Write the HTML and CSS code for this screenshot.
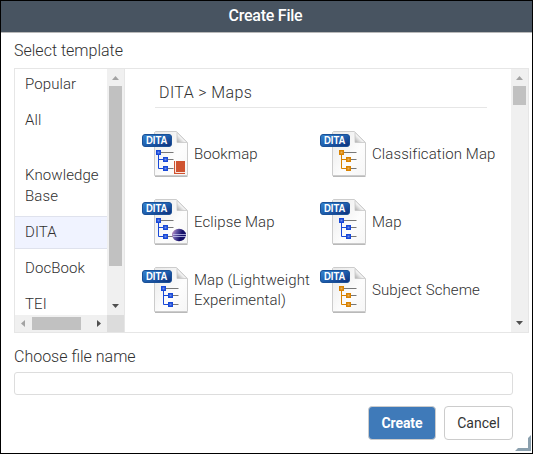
FILE: index.html
```html
<!DOCTYPE html>
<html lang="en">
<head>
<meta charset="utf-8">
<title>Create File</title>
<link rel="stylesheet" href="styles.css">
</head>
<body>
<svg class="defs" width="0" height="0" aria-hidden="true">
  <defs>
    <linearGradient id="paper" x1="0" y1="0" x2="1" y2="1"><stop offset="0" stop-color="#e8e8e8"/><stop offset=".6" stop-color="#fdfdfd"/><stop offset="1" stop-color="#f6f6f6"/></linearGradient>
    <linearGradient id="badge" x1="0" y1="0" x2="1" y2="1"><stop offset="0" stop-color="#3684cf"/><stop offset=".5" stop-color="#1f5fae"/><stop offset="1" stop-color="#0b2c78"/></linearGradient>
    <linearGradient id="fold" x1="0" y1="1" x2="1" y2="0"><stop offset="0" stop-color="#a8a8a8"/><stop offset=".5" stop-color="#ffffff"/></linearGradient>
    <linearGradient id="globe" x1="0" y1="0" x2="1" y2=".3"><stop offset="0" stop-color="#dba6cb"/><stop offset=".35" stop-color="#6a5aa8"/><stop offset=".75" stop-color="#15106a"/></linearGradient>
    <symbol id="doc" viewBox="0 0 48 48">
      <path d="M13 46.5H45.5" stroke="#8b8b8b" stroke-width="1" opacity=".6"/>
      <path d="M13.5 1.5H34.5L45.5 12.5V45.5H12.5V2.5Z" fill="url(#paper)" stroke="#cccccc"/>
      <path d="M35 2.5V12.5H45Z" fill="url(#fold)" stroke="#c8c8c8" stroke-width=".8"/>
      <rect x=".5" y="4.5" width="29" height="12" rx="2.5" fill="url(#badge)" stroke="#1b5197"/>
      <text class="badge-text" x="4" y="14" textLength="21.5" lengthAdjust="spacingAndGlyphs">DITA</text>
    </symbol>
    <symbol id="tree" viewBox="0 0 24 24">
      <path d="M5 3.5H17.5M12 10.5H17.5M12 19.5H17.5" stroke="#777777" fill="none"/>
      <path d="M2.5 3V19.5H8M2.5 10.5H8" stroke="currentColor" fill="none"/>
      <path d="M0 1h5v5h-5zM7 8h5v5h-5zM7 17h5v5h-5z" fill="currentColor"/>
      <path d="M1.5 2.5h2v2h-2zM8.5 9.5h2v2h-2zM8.5 18.5h2v2h-2z" fill="#fff" opacity=".38"/>
    </symbol>
  </defs>
</svg>
<div class="dialog">
  <header class="title">Create File</header>
  <main class="body">
    <div class="label">Select template</div>
    <section class="picker">
      <div class="sidebar">
        <nav class="categories">
          <div class="category">Popular</div>
          <div class="category all">All</div>
          <div class="category">Knowledge Base</div>
          <div class="category selected">DITA</div>
          <div class="category">DocBook</div>
          <div class="category">TEI</div>
        </nav>
        <div class="scroll-y"><i class="arrow up"></i><i class="thumb tall"></i><i class="arrow down"></i></div>
        <div class="scroll-x"><i class="arrow left"></i><i class="thumb wide"></i><i class="arrow right"></i></div>
        <div class="corner"></div>
      </div>
      <div class="templates">
        <h2 class="group">DITA &gt; Maps</h2>
        <div class="grid">
          <div class="template">
            <svg class="icon blue" viewBox="0 0 48 48"><use href="#doc" width="48" height="48"/><use href="#tree" x="14" y="19" width="24" height="24"/><path d="M32 31h11v13H32z" fill="#cf5330"/><path d="M33.5 31v11.5H43" stroke="#fbe6df" fill="none"/></svg>
            <span class="name">Bookmap</span>
          </div>
          <div class="template">
            <svg class="icon orange" viewBox="0 0 48 48"><use href="#doc" width="48" height="48"/><use href="#tree" x="19" y="19" width="24" height="24"/></svg>
            <span class="name">Classification Map</span>
          </div>
          <div class="template">
            <svg class="icon blue" viewBox="0 0 48 48"><use href="#doc" width="48" height="48"/><use href="#tree" x="14" y="19" width="24" height="24"/><ellipse cx="37" cy="37" rx="7" ry="6.2" fill="url(#globe)"/><path d="M31 36.5h13M31 38.5h13" stroke="#c3c4ee" stroke-width=".8"/></svg>
            <span class="name">Eclipse Map</span>
          </div>
          <div class="template">
            <svg class="icon blue" viewBox="0 0 48 48"><use href="#doc" width="48" height="48"/><use href="#tree" x="19" y="19" width="24" height="24"/></svg>
            <span class="name">Map</span>
          </div>
          <div class="template">
            <svg class="icon blue" viewBox="0 0 48 48"><use href="#doc" width="48" height="48"/><use href="#tree" x="19" y="19" width="24" height="24"/></svg>
            <span class="name">Map (Lightweight<br>Experimental)</span>
          </div>
          <div class="template">
            <svg class="icon orange" viewBox="0 0 48 48"><use href="#doc" width="48" height="48"/><use href="#tree" x="19" y="19" width="24" height="24"/></svg>
            <span class="name">Subject Scheme</span>
          </div>
        </div>
      </div>
      <div class="scroll-y"><i class="arrow up"></i><i class="thumb short"></i><i class="arrow down"></i></div>
    </section>
    <label class="label file-label" for="file">Choose file name</label>
    <input class="file" id="file" type="text">
    <footer class="actions">
      <button class="button primary">Create</button>
      <button class="button">Cancel</button>
    </footer>
  </main>
  <svg class="grip" viewBox="0 0 16 16"><path d="M16 0V16H0L3 13H13V3Z" fill="#8ba0ae"/></svg>
</div>
</body>
</html>
```
FILE: styles.css
```css
* { box-sizing: border-box; }
body { margin: 0; background: #fff; font: 300 16px/20px Roboto, sans-serif; color: #303030; overflow: hidden; }
.defs { position: absolute; }
.dialog { position: relative; width: 533px; height: 454px; border: 1px solid #000; background: #fff; }
.title { height: 32px; padding-right: 2px; background: #485461; border-bottom: 1px solid #b9b9b9; color: #fff; text-align: center; font-weight: 500; line-height: 29px; letter-spacing: -.25px; }
.body { display: flex; flex-direction: column; padding: 0 3px 0 13px; }
.label { height: 35px; padding-top: 8px; }
.picker { display: flex; width: 515px; height: 265px; border: 1px solid #e6e6e6; }
.sidebar { display: grid; grid-template: 246px 17px / 92px 17px; width: 110px; border-right: 1px solid #e6e6e6; }
.categories { overflow: hidden; }
.category { height: 33px; margin-bottom: 3px; padding: 5px 10px 0; font-size: 15px; line-height: 21px; letter-spacing: .1px; }
.category:nth-child(3) { height: 54px; margin-bottom: 2px; padding-right: 0; }
.category.all { margin-bottom: 22px; }
.category.selected { margin-bottom: 4px; background: #f0f3ff; border: solid #dfe2ed; border-width: 1px 0; }
.scroll-y { display: flex; flex-direction: column; align-items: center; width: 17px; padding: 7px 0; background: #f0f0f0; }
.scroll-x { display: flex; align-items: center; padding: 0 6px; background: #f0f0f0; }
.corner { background: #dcdcdc; }
.thumb { background: #c1c1c1; }
.tall { width: 13px; height: 180px; margin-top: 6px; }
.short { width: 13px; height: 19px; margin-top: 6px; }
.wide { width: 49px; height: 13px; margin-left: 7px; }
.arrow { width: 7px; height: 4px; background: #505050; clip-path: polygon(0 0, 100% 0, 50% 100%); }
.up { background: #a3a3a3; clip-path: polygon(0 100%, 50% 0, 100% 100%); }
.down { margin-top: auto; }
.left, .right { width: 4px; height: 7px; }
.left { background: #a3a3a3; clip-path: polygon(100% 0, 0 50%, 100% 100%); }
.right { margin-left: auto; clip-path: polygon(0 0, 100% 50%, 0 100%); }
.templates { width: 386px; overflow: hidden; }
.group { width: 332px; height: 39px; margin: 0 0 22px 30px; padding: 14px 0 0 4px; border-bottom: 1px solid #e6e6e6; font-size: 16px; font-weight: 300; line-height: 20px; letter-spacing: .4px; }
.grid { display: grid; grid-template-columns: 178px 190px; grid-auto-rows: 68px; padding-left: 17px; }
.template { display: flex; align-items: center; gap: 4px; height: 48px; }
.icon { width: 48px; height: 48px; flex: none; }
.blue { color: #1748d8; }
.orange { color: #d98200; }
.badge-text { font: 700 10px "Liberation Sans", sans-serif; fill: #fff; }
.name { font-size: 15px; white-space: nowrap; letter-spacing: .1px; }
.file-label { height: 39px; padding-top: 14px; }
.file { width: 499px; height: 23px; padding: 0 6px; border: 1px solid #ddd; border-radius: 3px; font: inherit; }
.actions { display: flex; justify-content: flex-end; gap: 8px; margin-top: 11px; padding-right: 16px; }
.button { width: 69px; height: 34px; padding: 0; border: 1px solid #ccc; border-radius: 4px; background: #fff; color: #333; font: 400 14px/31px Roboto, sans-serif; }
.primary { width: 68px; background: #3f7ab9; color: #fff; font-weight: 700; letter-spacing: -.1px; }
.grip { position: absolute; right: 1px; bottom: 2px; width: 16px; height: 16px; }
```
